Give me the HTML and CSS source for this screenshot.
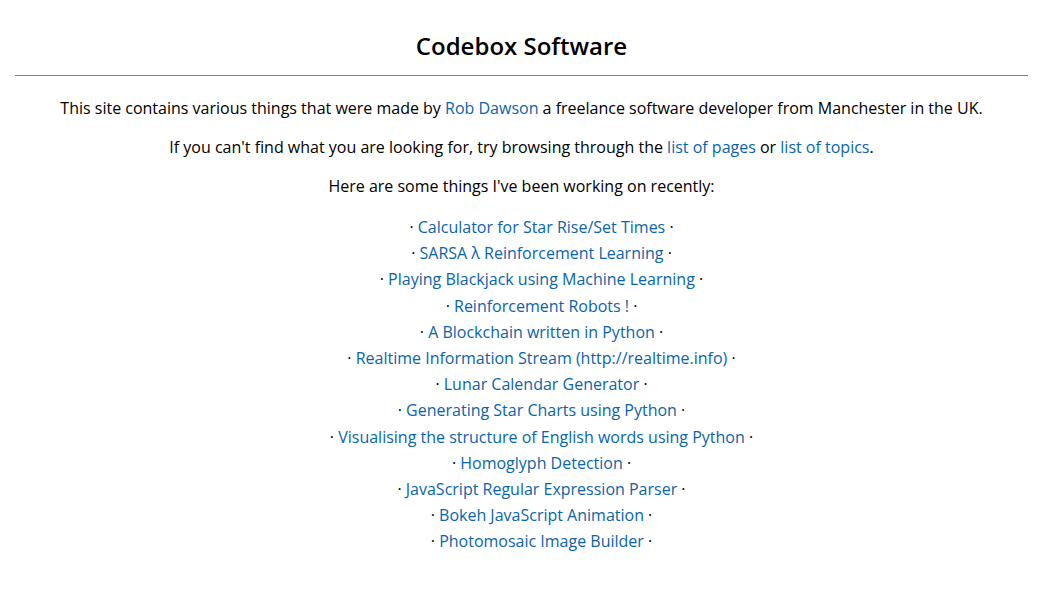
FILE: index.html
```html
<!DOCTYPE html>
<html>
<head>
<meta charset="utf-8">
<title>Codebox Software</title>
<link rel="stylesheet" href="styles.css">
</head>
<body>
<header class="header">
  <h1 class="title">Codebox Software</h1>
</header>
<main class="content">
  <p class="para">This site contains various things that were made by <a href="#">Rob Dawson</a> a freelance software developer from Manchester in the UK.</p>
  <p class="para">If you can't find what you are looking for, try browsing through the <a href="#">list of pages</a> or <a href="#">list of topics</a>.</p>
  <p class="para">Here are some things I've been working on recently:</p>
  <ul class="recent">
    <li>· <a href="#">Calculator for Star Rise/Set Times</a> ·</li>
    <li>· <a href="#">SARSA λ Reinforcement Learning</a> ·</li>
    <li>· <a href="#">Playing Blackjack using Machine Learning</a> ·</li>
    <li>· <a href="#">Reinforcement Robots !</a> ·</li>
    <li>· <a href="#">A Blockchain written in Python</a> ·</li>
    <li>· <a href="#">Realtime Information Stream (http://realtime.info)</a> ·</li>
    <li>· <a href="#">Lunar Calendar Generator</a> ·</li>
    <li>· <a href="#">Generating Star Charts using Python</a> ·</li>
    <li>· <a href="#">Visualising the structure of English words using Python</a> ·</li>
    <li>· <a href="#">Homoglyph Detection</a> ·</li>
    <li>· <a href="#">JavaScript Regular Expression Parser</a> ·</li>
    <li>· <a href="#">Bokeh JavaScript Animation</a> ·</li>
    <li>· <a href="#">Photomosaic Image Builder</a> ·</li>
  </ul>
</main>
</body>
</html>
```
FILE: styles.css
```css
html, body {
  margin: 0;
  padding: 0;
  background: #ffffff;
}
body {
  font-family: "Open Sans", "Liberation Sans", sans-serif;
  font-size: 16px;
  color: #000000;
  padding: 0 15px;
}
.header {
  border-bottom: 1px solid #808080;
  padding: 30px 0 13px;
}
.title {
  margin: 0;
  text-align: center;
  font-size: 24px;
  font-weight: 600;
  line-height: 32px;
}
.content {
  text-align: center;
  padding-top: 21px;
}
.para {
  margin: 0 0 16px;
  line-height: 23px;
}
a {
  color: #0a64ab;
  text-decoration: none;
}
.recent {
  list-style: none;
  margin: 0;
  padding: 0 0 0 40px;
}
.recent li {
  line-height: 26.2px;
}
```
